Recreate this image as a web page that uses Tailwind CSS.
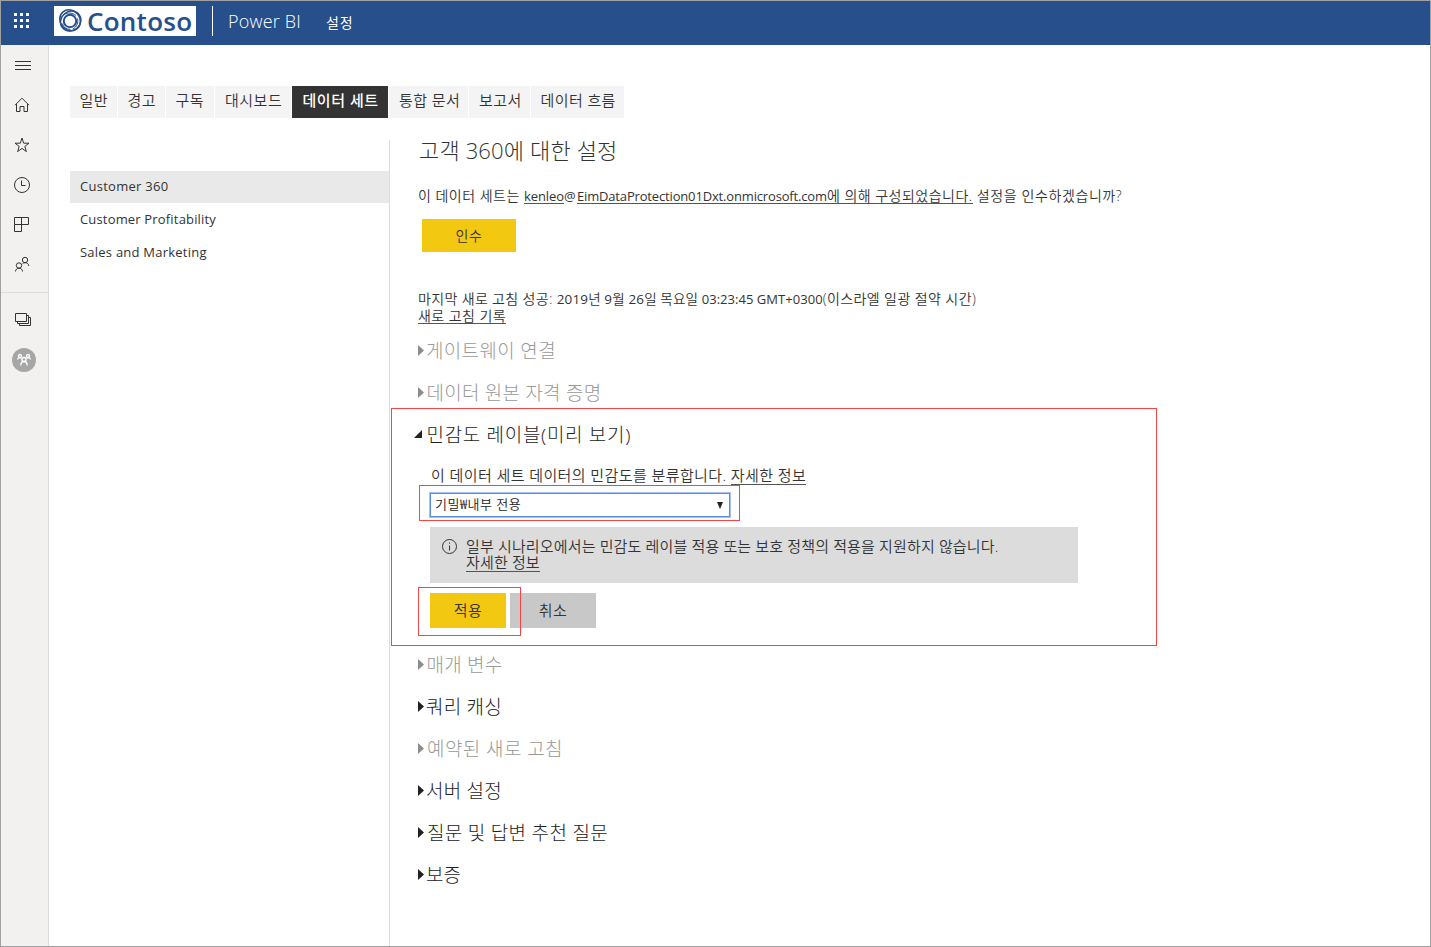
<!DOCTYPE html>
<html lang="ko"><head><meta charset="utf-8"><title>Power BI 설정</title>
<script src="https://cdn.jsdelivr.net/npm/@tailwindcss/browser@4"></script></head>
<body class="font-['Open_Sans','Noto_Sans_CJK_KR',sans-serif] text-[14px] text-[#333] bg-white">
<div class="h-[947px] w-[1431px] border border-[#a0a0a0] flex flex-col overflow-hidden [&_span]:whitespace-pre">
<header class="h-11 shrink-0 bg-[#264f8c] text-white flex items-center">
  <svg class="ml-[13px] w-4 h-4 -mt-[4px] shrink-0" viewBox="0 0 16 16" fill="#fff"><path d="M0 0h3v3H0zM6 0h3v3H6zM12 0h3v3h-3zM0 6h3v3H0zM6 6h3v3H6zM12 6h3v3h-3zM0 12h3v3H0zM6 12h3v3H6zM12 12h3v3h-3z"/></svg>
  <div class="ml-6 -mt-[5px] w-[142px] h-[30px] bg-white flex items-center text-[#264f8c]">
    <svg class="ml-1 w-6 h-6 shrink-0" viewBox="0 0 24 24" fill="none" stroke="currentColor"><ellipse cx="11.500" cy="11.500" rx="11" ry="9.800" stroke-width="1.500" transform="rotate(50 12 12)"/><ellipse cx="12.500" cy="12.500" rx="10.600" ry="9.600" stroke-width="1.500" transform="rotate(-40 12 12)"/><circle cx="12" cy="12" r="6.200" stroke-width="2"/><path d="M5 6.500C8 3.500 14 3 18 6.500M19.500 9.500c1.200 4-.8 8.500-4.500 10.500M4.200 14.500c1 3.500 4.500 6 8.300 6" stroke-width="1"/></svg>
    <span class="ml-[5px] text-[26px] leading-[30px] font-semibold tracking-[0.25px]">Contoso</span>
  </div>
  <div class="ml-4 -mt-[5px] w-px h-[30px] bg-white"></div>
  <span class="ml-[15px] -mt-[3px] text-[18px] font-light tracking-[0.19px]">Power BI</span>
  <span class="ml-[25px] -mt-px text-[14px] tracking-[0.9px]">설정</span>
</header>
<div class="flex flex-1 min-h-0">
  <nav class="w-12 shrink-0 bg-[#f2f1f0] border-r border-[#dcdcdc] flex flex-col text-[#333]">
    <div class="h-10 pl-[14px] flex items-center"><svg class="w-4 h-10" viewBox="0 0 16 40" stroke="currentColor" stroke-width="1"><path d="M0 16.500h16M0 20.500h16M0 24.500h16"/></svg></div>
    <div class="h-10 pl-[13px] flex items-center"><svg class="w-4 h-4" viewBox="0 0 16 16" fill="none" stroke="currentColor"><path d="M1 8.200L8 1.200l7 7M2.500 7v7.500h3.500V9.500h4v5h3.500V7"/></svg></div>
    <div class="h-10 pl-[13px] flex items-center"><svg class="w-4 h-4" viewBox="0 0 16 16" fill="none" stroke="currentColor"><path d="M8 1L9.700 6.200H15L10.800 9.400L12.400 14.600L8 11.400L3.600 14.600L5.200 9.400L1 6.200H6.300Z"/></svg></div>
    <div class="h-10 pl-[13px] flex items-center"><svg class="w-4 h-4" viewBox="0 0 16 16" fill="none" stroke="currentColor"><circle cx="8" cy="8" r="7.500"/><path d="M7.500 3.500v5h4"/></svg></div>
    <div class="h-10 pl-[13px] flex items-center"><svg class="w-4 h-4" viewBox="0 0 16 16" fill="none" stroke="currentColor"><path d="M.5.500h14v7H.5zM7.500.500v14H.5v-7"/></svg></div>
    <div class="h-12 pt-[11px] pl-[13px] border-b border-[#dcdcdc]"><svg class="w-4 h-4" viewBox="0 0 16 16" fill="none" stroke="currentColor"><circle cx="11" cy="4" r="2.700"/><circle cx="5" cy="9.500" r="2.700"/><path d="M1.500 15.500c0-2 1.500-3.300 3.500-3.300s3.500 1.300 3.500 3.300M8.500 7.700c.7-.7 1.500-1 2.500-1 2.200 0 3.600 1.200 3.800 3.300"/></svg></div>
    <div class="h-[35px] pt-[18px] pl-[14px]"><svg class="w-[17px] h-[17px]" viewBox="0 0 17 17" fill="none" stroke="currentColor"><path d="M.5 2.500h11v8H.5zM11.500 4.500h2v8h-11v-2M13.500 6.500h2v8h-11v-2"/></svg></div>
    <div class="mt-5 ml-[11px] w-6 h-6 rounded-full bg-[#a6a6a6] flex items-center justify-center"><svg class="w-4 h-4" viewBox="0 0 16 16" fill="none" stroke="#fff" stroke-width="1.300"><circle cx="4" cy="4" r="1.500"/><circle cx="12" cy="4" r="1.500"/><circle cx="8" cy="7.500" r="2"/><path d="M4.800 13.500c0-2.500 1.200-4 3.200-4s3.200 1.500 3.200 4M1.500 7.500c.2-1.300 1-2 2.500-2l1.500 1M14.500 7.500c-.2-1.300-1-2-2.500-2l-1.500 1"/></svg></div>
  </nav>
  <div class="flex-1 flex flex-col pt-[41px] pl-[21px]">
    <div class="flex gap-px h-8 shrink-0 text-[15px] leading-[29px] *:bg-[#f4f4f4] tracking-[0.5px] font-[350]">
      <div class="w-[47px] pl-[9.5px]"><span>일반</span></div>
      <div class="w-[47px] pl-[9.5px]"><span>경고</span></div>
      <div class="w-12 pl-[9.5px]"><span>구독</span></div>
      <div class="w-[76px] pl-[10px]"><span>대시보드</span></div>
      <div class="w-24 pl-[10.5px] bg-[#333]! text-white font-medium"><span class="tracking-[0.55px]">데이터 세트</span></div>
      <div class="w-[79px] pl-[10px]"><span class="tracking-[0.4px]">통합 문서</span></div>
      <div class="w-[61px] pl-[10px]"><span>보고서</span></div>
      <div class="w-[93px] pl-[9.5px]"><span class="tracking-[0.4px]">데이터 흐름</span></div>
    </div>
    <div class="flex flex-1 mt-[22px]">
      <div class="w-80 border-r border-[#dcdcdc] pt-[31px] leading-[31px] text-[13px]">
        <div class="h-8 pl-[10px] mb-px bg-[#e9e9e9]"><span class="tracking-[0.28px]">Customer 360</span></div>
        <div class="h-8 pl-[10px] mb-px"><span class="tracking-[0.17px]">Customer Profitability</span></div>
        <div class="h-8 pl-[10px]"><span class="tracking-[0.23px]">Sales and Marketing</span></div>
      </div>
      <div class="w-[768px] relative font-[350] [&_b]:font-normal">
        <div class="pl-[29px] h-6 leading-[20px] text-[22px] font-light"><span class="tracking-[0.15px]">고객 360에 대한 설정</span></div>
        <div class="pl-7 mt-[22px] h-[18px] leading-[20px] flex"><span class="tracking-[0.49px]">이 데이터 세트는 </span><span class="border-b border-[#555] text-[13px] font-normal tracking-[-0.09px]">kenleo</span><span class="text-[13px] font-normal w-[13px]">@</span><span class="border-b border-[#555] text-[13px] font-normal tracking-[-0.16px]">EimDataProtection01Dxt.onmicrosoft.com</span><span class="border-b border-[#555] tracking-[0.48px]">에 의해 구성되었습니다.</span><span class="tracking-[0.6px]"> 설정을 인수하겠습니까?</span></div>
        <div class="ml-8 mt-[15px] w-[94px] h-[33px] leading-[33px] bg-[#f2c811] text-center"><span class="tracking-[0.6px]">인수</span></div>
        <div class="pl-7 mt-[38px] h-[17px] leading-[18px] flex"><span class="tracking-[0.35px]">마지막 새로 고침 성공: </span><span class="text-[13.5px] tracking-[0.14px]"><b>2019</b>년 <b>9</b>월 <b>26</b>일 목요일 </span><span class="text-[13px] font-normal tracking-[0.04px]">03:23:45 GMT+0300</span><span class="tracking-[0.41px]">(이스라엘 일광 절약 시간)</span></div>
        <div class="pl-7 h-[17px] leading-[18px] flex"><span class="border-b border-[#555] tracking-[0.44px]">새로 고침 기록</span></div>
        <div class="mt-[6px] text-[19px] font-light [&_svg]:-mt-[2px]">
          <div class="h-[42px] pl-7 flex items-center text-[#999]"><svg class="w-[6px] h-[11px] mr-[2px]" viewBox="0 0 6 11" fill="#8c8c8c"><path d="M0 0l6 5.500L0 11z"/></svg><span class="tracking-[0.33px]">게이트웨이 연결</span></div>
          <div class="h-[42px] pl-7 flex items-center text-[#999]"><svg class="w-[6px] h-[11px] mr-[2.500px]" viewBox="0 0 6 11" fill="#8c8c8c"><path d="M0 0l6 5.500L0 11z"/></svg><span class="tracking-[0.23px]">데이터 원본 자격 증명</span></div>
          <div class="h-[42px] pl-6 flex items-center text-[#222]"><svg class="w-[8px] h-[8px] mr-[4.500px]" viewBox="0 0 8 8" fill="#222"><path d="M8 0v8H0z"/></svg><span class="tracking-[0.68px]">민감도 레이블(미리 보기)</span></div>
        </div>
        <div class="mt-[9px] ml-[41px] h-[21px] leading-5 text-[15px] flex"><span class="tracking-[0.41px]">이 데이터 세트 데이터의 민감도를 분류합니다. </span><span class="border-b border-[#555] h-5 tracking-[0.4px]">자세한 정보</span></div>
        <div class="mt-[7px] ml-10 w-[300px] h-6 border border-[#5a8ee0] ring-1 ring-[#a3c0ee] flex items-center justify-between pl-1 pr-[6px] text-[13px] text-[#222]"><span class="tracking-[0.5px]">기밀₩내부 전용</span><svg class="w-[6px] h-[7px]" viewBox="0 0 6 7" fill="#222"><path d="M0 0h6L3 7z"/></svg></div>
        <div class="mt-[10px] ml-10 w-[648px] h-14 bg-[#dcdcdc] flex pl-3 pt-[11px] text-[15px]"><svg class="w-[15px] h-[15px] mt-px mr-[9px] shrink-0" viewBox="0 0 15 15" fill="none" stroke="#333"><circle cx="7.500" cy="7.500" r="7"/><path d="M7.500 6.500v5M7.500 3.500v1.200"/></svg><div class="leading-4 flex flex-col items-start"><span class="tracking-[0.15px]">일부 시나리오에서는 민감도 레이블 적용 또는 보호 정책의 적용을 지원하지 않습니다.</span><span class="border-b border-[#555] h-[18px] tracking-[0.15px]">자세한 정보</span></div></div>
        <div class="mt-[10px] ml-10 flex gap-1 h-[35px] leading-[35px] text-[15px] tracking-[0.5px] text-center"><div class="w-[76px] bg-[#f2c811]">적용</div><div class="w-[86px] bg-[#c8c8c8]">취소</div></div>
        <div class="mt-4 text-[19px] font-light text-[#222] [&_svg]:-mt-[2px]">
          <div class="h-[42px] pl-7 flex items-center text-[#999]"><svg class="w-[6px] h-[11px] mr-[2.500px]" viewBox="0 0 6 11" fill="#8c8c8c"><path d="M0 0l6 5.500L0 11z"/></svg><span class="tracking-[0.23px]">매개 변수</span></div>
          <div class="h-[42px] pl-7 flex items-center"><svg class="w-[6px] h-[11px] mr-[2px]" viewBox="0 0 6 11" fill="#222"><path d="M0 0l6 5.500L0 11z"/></svg><span class="tracking-[0.23px]">쿼리 캐싱</span></div>
          <div class="h-[42px] pl-7 flex items-center text-[#999]"><svg class="w-[6px] h-[11px] mr-[3px]" viewBox="0 0 6 11" fill="#8c8c8c"><path d="M0 0l6 5.500L0 11z"/></svg><span class="tracking-[0.42px]">예약된 새로 고침</span></div>
          <div class="h-[42px] pl-7 flex items-center"><svg class="w-[6px] h-[11px] mr-[2px]" viewBox="0 0 6 11" fill="#222"><path d="M0 0l6 5.500L0 11z"/></svg><span class="tracking-[0.23px]">서버 설정</span></div>
          <div class="h-[42px] pl-7 flex items-center"><svg class="w-[6px] h-[11px] mr-[3px]" viewBox="0 0 6 11" fill="#222"><path d="M0 0l6 5.500L0 11z"/></svg><span class="tracking-[0.3px]">질문 및 답변 추천 질문</span></div>
          <div class="h-[42px] pl-7 flex items-center"><svg class="w-[6px] h-[11px] mr-[2px]" viewBox="0 0 6 11" fill="#222"><path d="M0 0l6 5.500L0 11z"/></svg><span>보증</span></div>
        </div>
        <!-- callout frames -->
        <div class="absolute left-px top-[268px] w-[766px] h-[238px] border border-[#f54545]"></div>
        <div class="absolute left-[29px] top-[345px] w-[321px] h-[36px] border border-[#f54545]"></div>
        <div class="absolute left-[28px] top-[447px] w-[103px] h-[49px] border border-[#f54545]"></div>
      </div>
    </div>
  </div>
</div>
</div>
</body></html>
